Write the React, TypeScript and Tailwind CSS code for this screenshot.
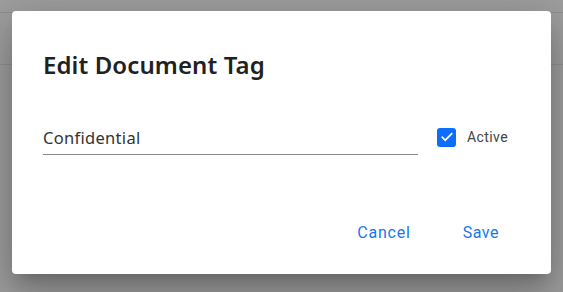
import React from "react";

export default function App() {
  return (
    <div className="relative w-[563px] h-[292px] overflow-hidden bg-[#9e9e9e]">
      {/* backdrop page lines */}
      <div className="absolute left-0 right-0 top-[12px] h-px bg-[#8f8f8f]" />
      <div className="absolute left-0 right-0 top-[64px] h-px bg-[#909090]" />
      <div className="absolute left-[12px] top-[11px] w-[539px] h-[263px] rounded-[4px] bg-white shadow-[0_11px_15px_-7px_rgba(0,0,0,0.2),0_24px_38px_3px_rgba(0,0,0,0.14),0_9px_46px_8px_rgba(0,0,0,0.12)] flex flex-col px-[31px]">
        <h2
          className="mt-[38px] text-[24px] leading-[32px] font-semibold text-[#212121] tracking-[0.1px]"
          style={{ fontFamily: '"Noto Sans", sans-serif' }}
        >
          Edit Document Tag
        </h2>
        <div className="mt-[45px] flex items-center">
          <div className="w-[375px] border-b border-[#8a8a8a] pb-[4px]">
            <span
              className="block text-[16.5px] leading-[24px] text-[#333333] tracking-[0.3px]"
              style={{ fontFamily: '"Noto Sans", sans-serif' }}
            >
              Confidential
            </span>
          </div>
          <div className="ml-[19px] flex items-center gap-[11px] -mt-[7px]">
            <div className="w-[19px] h-[19px] rounded-[3px] bg-[#0d6efd] flex items-center justify-center">
              <svg width="14" height="14" viewBox="0 0 24 24" fill="none" stroke="white" strokeWidth="3" strokeLinecap="square">
                <path d="M4 12.5l5 5L20 6.5" />
              </svg>
            </div>
            <span
              className="text-[14px] text-[#444444] tracking-[0.4px]"
              style={{ fontFamily: 'Roboto, sans-serif' }}
            >
              Active
            </span>
          </div>
        </div>
        <div className="mt-auto mb-[29px] flex justify-end gap-[52px] pr-[21px]">
          <span className="text-[16px] leading-[24px] text-[#1a76ee] tracking-[0.8px]" style={{ fontFamily: 'Roboto, sans-serif' }}>
            Cancel
          </span>
          <span className="text-[16px] leading-[24px] text-[#1a76ee] tracking-[0.5px]" style={{ fontFamily: 'Roboto, sans-serif' }}>
            Save
          </span>
        </div>
      </div>
    </div>
  );
}
